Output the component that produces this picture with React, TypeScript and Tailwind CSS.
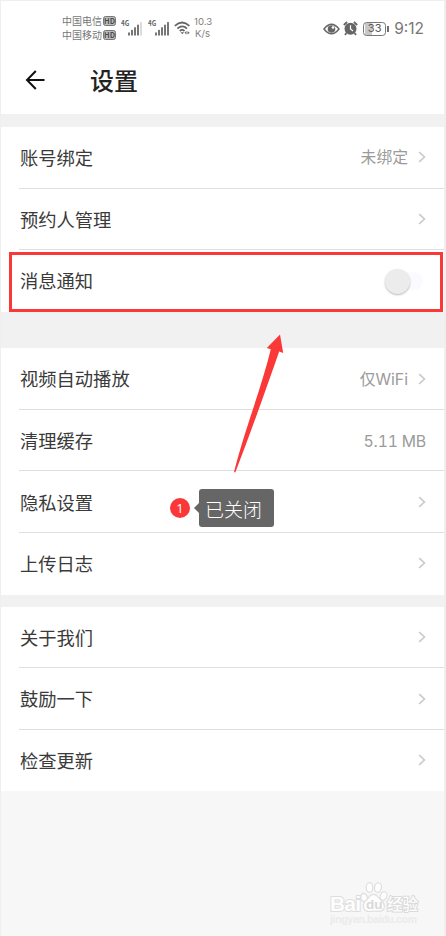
type SettingItem = {
  label: string;
  value?: string;
  arrow?: boolean;
  toggle?: boolean;
};

const accountItems: SettingItem[] = [
  { label: "账号绑定", value: "未绑定", arrow: true },
  { label: "预约人管理", arrow: true },
  { label: "消息通知", toggle: true },
];

const generalItems: SettingItem[] = [
  { label: "视频自动播放", value: "仅WiFi", arrow: true },
  { label: "清理缓存", value: "5.11 MB" },
  { label: "隐私设置", arrow: true },
  { label: "上传日志", arrow: true },
];

const aboutItems: SettingItem[] = [
  { label: "关于我们", arrow: true },
  { label: "鼓励一下", arrow: true },
  { label: "检查更新", arrow: true },
];

function Chevron() {
  return (
    <svg width="8" height="12" viewBox="0 0 8 12" fill="none" className="ml-[10px] shrink-0">
      <path d="M1.2 1.2 6.4 6 1.2 10.8" stroke="#cbcbcb" strokeWidth="1.7" />
    </svg>
  );
}

function Toggle() {
  return (
    <div className="mt-[2px] mr-[3px] flex h-[18px] w-[38px] items-center rounded-full bg-[linear-gradient(to_right,transparent_40%,#fafaff_40%)]">
      <div className="h-[25px] w-[25px] shrink-0 rounded-full bg-[#ececec] shadow-[0_1px_2px_rgba(0,0,0,0.28)]" />
    </div>
  );
}

function Row({ item, last }: { item: SettingItem; last: boolean }) {
  return (
    <div
      className={`ml-[18px] flex h-[61.6px] items-center justify-between border-b pr-[18px] pl-px ${
        last ? "border-transparent" : "border-[#dfdfdf]"
      }`}
    >
      <span className="text-[18.3px] leading-none text-[#3a3a3a]">{item.label}</span>
      <div className="flex items-center">
        {item.value ? (
          <span
            className={`font-['Inter','Noto_Sans_CJK_SC',sans-serif] text-[15.8px] leading-none text-[#9b9b9b] ${
              item.arrow ? "pt-[2px]" : "pt-[3px] tracking-[-0.2px] tabular-nums"
            }`}
          >
            {item.value}
          </span>
        ) : null}
        {item.toggle ? <Toggle /> : null}
        {item.arrow ? <Chevron /> : null}
      </div>
    </div>
  );
}

function Group({ items }: { items: SettingItem[] }) {
  return (
    <section className="bg-white">
      {items.map((item, index) => (
        <Row key={item.label} item={item} last={index === items.length - 1} />
      ))}
    </section>
  );
}

function HdBadge() {
  return (
    <span className="flex h-[10px] w-[13px] items-center justify-center rounded-[2.5px] border border-[#777] bg-[#bdbdbd] text-[7.5px] leading-none font-bold text-[#4d4d4d]">
      HD
    </span>
  );
}

function Signal({ bars }: { bars: number }) {
  return (
    <div className="relative h-[16px] w-[22px]">
      <span className="absolute top-0 left-0 origin-left scale-x-90 text-[7px] leading-none font-bold text-[#666]">
        4G
      </span>
      <svg width="15" height="14" viewBox="0 0 15 14" className="absolute top-[2px] left-[7px]">
        {[0, 1, 2, 3, 4].map((i) => (
          <rect
            key={i}
            x={i * 3}
            y={10.5 - i * 2.6}
            width="2"
            height={3 + i * 2.6}
            fill={i < bars ? "#777" : "#dcdcdc"}
          />
        ))}
      </svg>
    </div>
  );
}

function StatusBar() {
  return (
    <div className="flex h-[54px] items-center pr-[20px] pl-[61px] text-[#777]">
      <div className="flex flex-col gap-[4px] text-[10px] leading-[10px]">
        <div className="flex items-center gap-[1px]">
          <span>中国电信</span>
          <HdBadge />
        </div>
        <div className="flex items-center gap-[1px]">
          <span>中国移动</span>
          <HdBadge />
        </div>
      </div>
      <div className="ml-[5px] flex items-center gap-[5px]">
        <Signal bars={4} />
        <Signal bars={5} />
      </div>
      <svg width="17" height="14" viewBox="0 0 17 14" fill="none" className="ml-[4px]">
        <g stroke="#666" strokeWidth="1.8">
          <path d="M.8 4.8Q8 -1.800 15.400 4.800" />
          <path d="M3.4 7.6Q8.2 3.2 13 7.6" />
          <path d="M5.8 10Q8.2 7.8 10.5 10" />
        </g>
        <path d="m6.5 11.2 1.8 2 1.8-2z" fill="#666" />
        <path d="m10.5 11.8 2-1.8v3.600zM13.500 10v3.600l2.200-1.800z" fill="#666" />
      </svg>
      <div className="ml-[3px] font-['Inter',sans-serif] text-[9.6px] leading-[12px] text-[#808080]">
        <div>10.3</div>
        <div className="pl-px">K/s</div>
      </div>

      <div className="ml-auto flex items-center pt-px">
        <svg width="17" height="12" viewBox="0 0 17 12" fill="none">
          <path d="M1 6Q8.5 -3.6 16 6Q8.5 15.6 1 6Z" stroke="#666" strokeWidth="1.5" />
          <circle cx="8.5" cy="6" r="3.8" fill="#666" />
          <circle cx="10" cy="4.5" r="1.3" fill="#fff" />
        </svg>
        <svg width="15" height="15" viewBox="0 0 15 15" fill="none" className="ml-[3px]">
          <circle cx="7.5" cy="7.8" r="6" fill="#666" />
          <path d="m.8 4 3.3-3M14.2 4l-3.3-3M3.5 12.2l-1.6 1.7M11.5 12.2l1.6 1.7" stroke="#666" strokeWidth="1.8" />
          <path d="M7.5 4.2V8l2.5 2" stroke="#fff" strokeWidth="1.2" />
        </svg>
        <div className="ml-[5px] flex h-[14px] w-[23px] items-center justify-center rounded-[3.5px] border border-[#777] bg-[linear-gradient(to_right,#fff_1px,#c8c8c8_1px,#c8c8c8_8px,#fff_8px)] font-['Inter',sans-serif] text-[11px] leading-none text-[#555]">
          33
        </div>
        <div className="ml-px h-[6px] w-[2px] bg-[#707070]" />
        <span className="ml-[5px] font-['Inter',sans-serif] text-[15.5px] leading-none">9:12</span>
      </div>
    </div>
  );
}

function Watermark() {
  return (
    <div className="absolute top-[881px] left-[327px] font-['Liberation_Sans','Noto_Sans_CJK_SC',sans-serif] font-bold">
      <svg width="92" height="46" viewBox="0 0 92 46">
        <g fill="#fdfdfd" stroke="#dedede" strokeWidth="1.2">
          <ellipse cx="36" cy="16.5" rx="3.2" ry="4.2" transform="rotate(-15 36 16.5)" />
          <ellipse cx="41.5" cy="6.5" rx="3.4" ry="4.8" />
          <ellipse cx="50" cy="6.5" rx="3.4" ry="4.8" transform="rotate(10 50 6.5)" />
          <ellipse cx="55.5" cy="15" rx="3.2" ry="4.5" transform="rotate(20 55.5 15)" />
          <path d="M36 27.5C33 22.500 39 19 41.500 15.500C43.500 12.500 48 12.500 50 16C52 19 58.500 22 56 27.500C54 32 49 30 46 30C43 30 38 32.500 36 27.500Z" />
        </g>
        <text x="2" y="30" fontSize="21" textLength="31" fill="#fdfdfd" stroke="#dedede" strokeWidth="2" paintOrder="stroke">
          Bai
        </text>
        <text x="38" y="27.5" fontSize="13.5" fill="#d8d8d8">du</text>
        <text x="59" y="29" fontSize="15.5" fontWeight="500" fill="#fdfdfd" stroke="#dadada" strokeWidth="2" paintOrder="stroke">
          经验
        </text>
        <text x="2" y="42" fontSize="10.5" fill="#ebebeb" textLength="87">jingyan.baidu.com</text>
      </svg>
    </div>
  );
}

function Annotations() {
  return (
    <>
      <div className="absolute top-[252px] left-[8px] h-[60px] w-[434px] border-[3px] border-[#fb3838]" />
      <svg width="50" height="140" viewBox="0 0 50 140" className="absolute top-[334px] left-[233px]">
        <path d="M46 .5 32.8 14 36.8 15.2C27 55 12 92 .1 137.5Q.8 139 1.5 138C18 95 32 55 45.2 17.4L49.2 19Z" fill="#fb3838" />
      </svg>
      <div className="absolute top-[498px] left-[169px] flex h-[20px] w-[20px] items-center justify-center rounded-full bg-[#fb3838] font-['Open_Sans',sans-serif] text-[13px] leading-none text-white">
        1
      </div>
      <div className="absolute top-[489px] left-[193px] flex items-center">
        <div className="h-0 w-0 border-y-[5px] border-r-[5px] border-y-transparent border-r-[#666]" />
        <div className="flex h-[38px] w-[75px] items-center rounded-[3px] bg-[#666] pl-[6px] text-[19px] leading-none font-light text-white">
          已关闭
        </div>
      </div>
    </>
  );
}

export default function App() {
  return (
    <div className="relative h-[936px] w-[446px] overflow-hidden border-r-2 border-l border-[#efefef] bg-[#f7f7f7] font-['Noto_Sans_CJK_SC',sans-serif]">
      <header className="h-[114px] border-t border-[#efefef] bg-white">
        <StatusBar />
        <div className="flex h-[50px] items-center pl-[24px]">
          <svg width="20" height="20" viewBox="0 0 20 20" fill="none" stroke="#111" strokeWidth="2">
            <path d="M10.8 1 2 10l8.8 9M2 10h17.5" />
          </svg>
          <h1 className="ml-[45px] text-[24px] leading-none font-medium text-[#222]">设置</h1>
        </div>
      </header>
      <main>
        <div className="h-[13px] bg-[#f1f1f1]" />
        <Group items={accountItems} />
        <div className="h-[36.5px] bg-[#f1f1f1]" />
        <Group items={generalItems} />
        <div className="h-[12px] bg-[#f1f1f1]" />
        <Group items={aboutItems} />
      </main>
      <Annotations />
      <Watermark />
    </div>
  );
}
